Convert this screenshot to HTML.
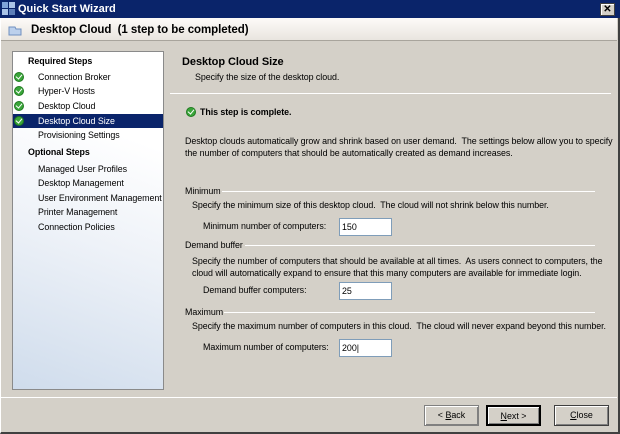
<!DOCTYPE html>
<html><head><style>
*{margin:0;padding:0;box-sizing:border-box}
body{width:620px;height:434px;background:#d4d0c8;font-family:"Liberation Sans",Tahoma,sans-serif;font-size:8.9px;color:#000;position:relative;overflow:hidden}
.a{position:absolute;white-space:nowrap;line-height:12px;letter-spacing:-0.06px}
.b{font-weight:bold}
#win{position:absolute;left:0;top:0;width:620px;height:434px;border-right:2px solid #404040;border-bottom:2px solid #404040;border-left:1px solid #fff}
#tb{position:absolute;left:0;top:0;width:620px;height:18px;background:#0a246a;color:#fff;font-weight:bold;font-size:11px;line-height:18px;padding-left:18px}
#hdr{position:absolute;left:1px;top:18px;width:616px;height:23px;background:linear-gradient(#fdfbf8,#e9e5df);border-bottom:1px solid #a8a49c}
#lp{position:absolute;left:12px;top:51px;width:152px;height:339px;border:1px solid #8a8a8a;background:linear-gradient(20deg,#cfdcec 0%,#eef2f8 45%,#fff 75%)}
.sel{position:absolute;left:13px;top:114px;width:150px;height:14px;background:#0a246a}
.ck{position:absolute;width:10px;height:10px;border-radius:50%;background:#3aa53a;border:1px solid #1f7a1f}
.ck:after{content:"";position:absolute;left:2px;top:0px;width:3px;height:5px;border:solid #fff;border-width:0 1.5px 1.5px 0;transform:rotate(40deg)}
.hr{position:absolute;height:1px;background:#a8a49c;border-bottom:1px solid #fff}
.in{position:absolute;width:53px;height:18px;background:#fff;border:1px solid #7f9db9;line-height:16px;padding-left:2px}
.btn{position:absolute;top:405px;width:55px;height:21px;border:1px solid #404040;box-shadow:inset 1px 1px #fff,inset -1px -1px #808080;text-align:center;line-height:19px;background:#d4d0c8}
</style></head><body>
<div id="win"></div>
<div id="tb">Quick Start Wizard</div>
<svg style="position:absolute;left:2px;top:2px" width="14" height="14"><rect x="0" y="0" width="6" height="6" fill="#7fa4d8"/><rect x="7" y="0" width="6" height="6" fill="#a9c3e6"/><rect x="0" y="7" width="6" height="6" fill="#a9c3e6"/><rect x="7" y="7" width="6" height="6" fill="#5d7fb8"/></svg>
<div style="position:absolute;left:600px;top:3px;width:15px;height:13px;background:#d4d0c8;border:1px solid #404040;box-shadow:inset 1px 1px #fff;font-size:10px;font-weight:bold;text-align:center;line-height:11px">✕</div>
<div id="hdr"></div>
<svg style="position:absolute;left:7px;top:23px" width="16" height="14"><path d="M2 4 L8 4 L9 6 L14 6 L14 12 L2 12 Z" fill="#bcd0ec" stroke="#6f8fbf"/></svg>
<div class="a b" style="left:31px;top:23px;font-size:11.5px;line-height:14px">Desktop Cloud&nbsp; (1 step to be completed)</div>
<div id="lp"></div>
<div class="sel"></div>
<div class="a b" style="left:28px;top:55px">Required Steps</div>
<div class="ck" style="left:14px;top:72px"></div><div class="a" style="left:38px;top:71px">Connection Broker</div>
<div class="ck" style="left:14px;top:86px"></div><div class="a" style="left:38px;top:85px">Hyper-V Hosts</div>
<div class="ck" style="left:14px;top:101px"></div><div class="a" style="left:38px;top:100px">Desktop Cloud</div>
<div class="ck" style="left:14px;top:116px"></div><div class="a" style="left:38px;top:115px;color:#fff">Desktop Cloud Size</div>
<div class="a" style="left:38px;top:129px">Provisioning Settings</div>
<div class="a b" style="left:28px;top:146px">Optional Steps</div>
<div class="a" style="left:38px;top:163px">Managed User Profiles</div>
<div class="a" style="left:38px;top:177px">Desktop Management</div>
<div class="a" style="left:38px;top:192px">User Environment Management</div>
<div class="a" style="left:38px;top:206px">Printer Management</div>
<div class="a" style="left:38px;top:221px">Connection Policies</div>

<div class="a b" style="left:182px;top:56px;font-size:11px">Desktop Cloud Size</div>
<div class="a" style="left:195px;top:71px">Specify the size of the desktop cloud.</div>
<div class="hr" style="left:170px;top:93px;width:441px"></div>
<div class="ck" style="left:186px;top:107px"></div>
<div class="a b" style="left:200px;top:106px">This step is complete.</div>
<div class="a" style="left:185px;top:135px">Desktop clouds automatically grow and shrink based on user demand.&nbsp; The settings below allow you to specify</div>
<div class="a" style="left:185px;top:147px">the number of computers that should be automatically created as demand increases.</div>

<div class="a" style="left:185px;top:185px">Minimum</div><div class="hr" style="left:222px;top:191px;width:373px"></div>
<div class="a" style="left:192px;top:199px">Specify the minimum size of this desktop cloud.&nbsp; The cloud will not shrink below this number.</div>
<div class="a" style="left:203px;top:220px">Minimum number of computers:</div><div class="in" style="left:339px;top:218px">150</div>

<div class="a" style="left:185px;top:239px">Demand buffer</div><div class="hr" style="left:245px;top:245px;width:350px"></div>
<div class="a" style="left:192px;top:255px">Specify the number of computers that should be available at all times.&nbsp; As users connect to computers, the</div>
<div class="a" style="left:192px;top:267px">cloud will automatically expand to ensure that this many computers are available for immediate login.</div>
<div class="a" style="left:203px;top:284px">Demand buffer computers:</div><div class="in" style="left:339px;top:282px">25</div>

<div class="a" style="left:185px;top:306px">Maximum</div><div class="hr" style="left:224px;top:312px;width:371px"></div>
<div class="a" style="left:192px;top:320px">Specify the maximum number of computers in this cloud.&nbsp; The cloud will never expand beyond this number.</div>
<div class="a" style="left:203px;top:341px">Maximum number of computers:</div><div class="in" style="left:339px;top:339px">200|</div>

<div class="hr" style="left:1px;top:397px;width:616px"></div>
<div class="btn" style="left:424px;border-color:#808080">&lt; <u>B</u>ack</div>
<div class="btn" style="left:486px;border:2px solid #000"><u>N</u>ext &gt;</div>
<div class="btn" style="left:554px"><u>C</u>lose</div>
</body></html>
